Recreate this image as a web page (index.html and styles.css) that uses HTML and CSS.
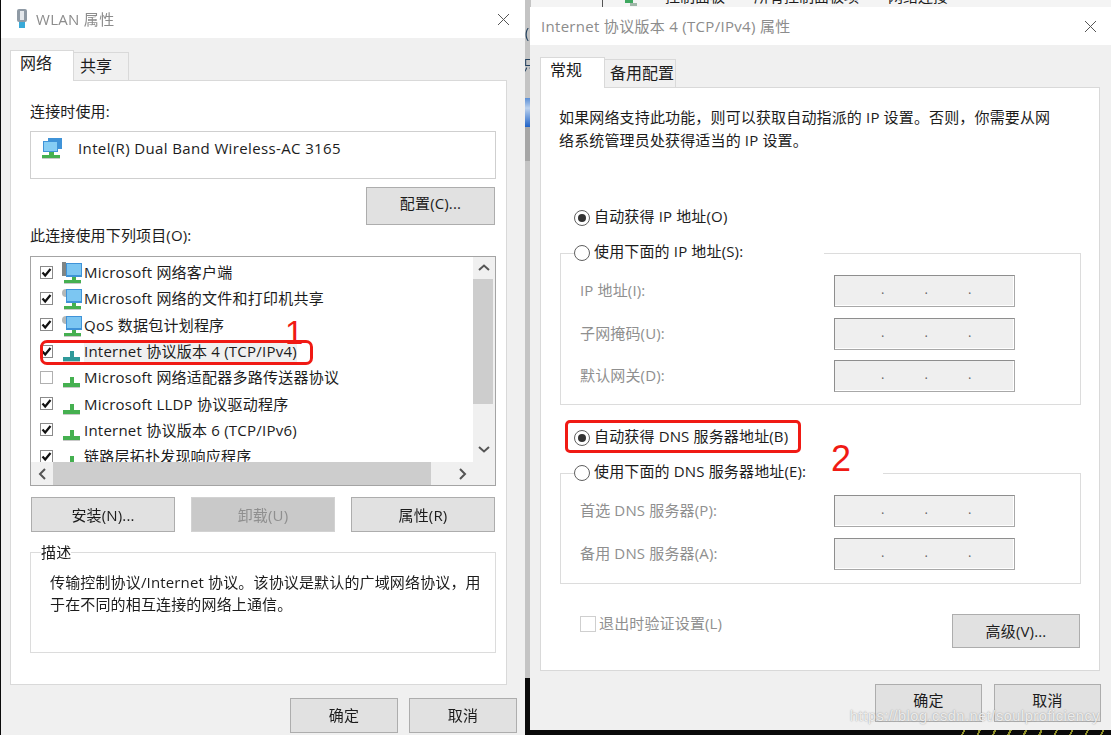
FILE: index.html
```html
<!DOCTYPE html>
<html lang="zh-CN">
<head>
<meta charset="utf-8">
<title>WLAN 属性</title>
<link rel="stylesheet" href="styles.css">
</head>
<body>
<svg class="defs" width="0" height="0" aria-hidden="true">
  <defs>
    <g id="net">
      <rect x="0" y="3" width="4" height="14" fill="#7f8585"/>
      <rect x="4" y="4" width="16" height="14" fill="#3f93d8"/>
      <rect x="5" y="5" width="14" height="11" fill="#7cc6f2"/>
      <rect x="10" y="18" width="4" height="4" fill="#45b050"/>
      <rect x="2" y="21" width="17" height="3" fill="#45b050"/>
      <rect x="2" y="24" width="17" height="1" fill="#c9c9c9"/>
    </g>
    <g id="gear">
      <circle cx="4" cy="8" r="4" fill="#b4b8b8"/>
      <rect x="4" y="4" width="16" height="14" fill="#3f93d8"/>
      <rect x="5" y="5" width="14" height="11" fill="#7cc6f2"/>
      <rect x="10" y="18" width="4" height="4" fill="#45b050"/>
      <rect x="2" y="21" width="17" height="3" fill="#45b050"/>
      <rect x="2" y="24" width="17" height="1" fill="#c9c9c9"/>
    </g>
    <g id="proto">
      <rect x="8" y="13" width="4" height="7" fill="#45b050"/>
      <rect x="1" y="19" width="17" height="4" fill="#45b050"/>
      <rect x="1" y="23" width="17" height="1" fill="#c9c9c9"/>
    </g>
    <g id="proto-sel">
      <rect x="8" y="13" width="4" height="7" fill="#2f9a9a"/>
      <rect x="1" y="19" width="17" height="4" fill="#2f9a9a"/>
      <rect x="1" y="23" width="17" height="1" fill="#c9c9c9"/>
    </g>
    <g id="close">
      <path d="M1 1 12 12M12 1 1 12" fill="none" stroke="#555" stroke-width="1"/>
    </g>
    <g id="check">
      <path d="M2.500 6.500 5.200 9.500 10.500 3" fill="none" stroke="#111" stroke-width="2.200"/>
    </g>
  </defs>
</svg>

<main class="desk">
  <div class="behind-top">
    <span class="sep"></span>
    <svg class="crumb-ico" width="12" height="7" viewBox="0 0 12 7"><rect x="0" y="0" width="8" height="3" fill="#3fa860"/><rect x="5" y="3" width="7" height="3" fill="#9fb7a8"/></svg>
    <span class="crumb">控制面板</span><span class="crumb">所有控制面板项</span><span class="crumb">网络连接</span>
  </div>
  <div class="strip">
    <span class="strip-char">(</span>
    <span class="strip-char strip-low">识</span>
    <span class="strip-blue"></span>
    <span class="strip-dark"></span>
  </div>
  <div class="stripes"></div>

  <section class="win win-a">
    <header class="titlebar">
      <svg class="usb" width="14" height="20" viewBox="0 0 14 20">
        <rect x="2" y="0" width="10" height="13" rx="2" fill="#8f9aa5"/>
        <rect x="5" y="2" width="4" height="9" fill="#e4e8ec"/>
        <rect x="4" y="13" width="6" height="6" fill="#38a9d8"/>
      </svg>
      <h1 class="title">WLAN 属性</h1>
      <svg class="close" width="13" height="13" viewBox="0 0 13 13"><use href="#close"/></svg>
    </header>
    <nav class="tabs">
      <span class="tab tab-on tab-a1">网络</span>
      <span class="tab tab-a2">共享</span>
    </nav>
    <div class="panel panel-a">
      <div class="lbl">连接时使用:</div>
      <div class="adapter">
        <svg class="adapter-ico" width="20" height="22" viewBox="0 0 20 22">
          <rect x="6" y="0" width="14" height="11" fill="#3f93d8"/>
          <rect x="1" y="3" width="15" height="11" fill="#3f93d8"/>
          <rect x="2" y="4" width="13" height="9" fill="#86cdf4"/>
          <rect x="7" y="14" width="5" height="3" fill="#45b050"/>
          <rect x="0" y="17" width="18" height="3" fill="#45b050"/>
          <rect x="0" y="20" width="18" height="1" fill="#c9c9c9"/>
        </svg>
        <span>Intel(R) Dual Band Wireless-AC 3165</span>
      </div>
      <div class="cfg-row"><button class="btn btn-cfg">配置(C)...</button></div>
      <div class="lbl lbl-items">此连接使用下列项目(O):</div>

      <div class="list">
        <div class="rows">
          <div class="row"><span class="cb"><svg width="13" height="13" viewBox="0 0 13 13"><use href="#check"/></svg></span><svg class="ri" width="20" height="26" viewBox="0 0 20 26"><use href="#net"/></svg><span class="rt">Microsoft 网络客户端</span></div>
          <div class="row"><span class="cb"><svg width="13" height="13" viewBox="0 0 13 13"><use href="#check"/></svg></span><svg class="ri" width="20" height="26" viewBox="0 0 20 26"><use href="#gear"/></svg><span class="rt">Microsoft 网络的文件和打印机共享</span></div>
          <div class="row"><span class="cb"><svg width="13" height="13" viewBox="0 0 13 13"><use href="#check"/></svg></span><svg class="ri" width="20" height="26" viewBox="0 0 20 26"><use href="#gear"/></svg><span class="rt">QoS 数据包计划程序</span></div>
          <div class="row"><span class="cb"><svg width="13" height="13" viewBox="0 0 13 13"><use href="#check"/></svg></span><svg class="ri" width="20" height="26" viewBox="0 0 20 26"><use href="#proto-sel"/></svg><span class="rt rt-sel">Internet 协议版本 4 (TCP/IPv4)</span></div>
          <div class="row"><span class="cb cb-off"></span><svg class="ri" width="20" height="26" viewBox="0 0 20 26"><use href="#proto"/></svg><span class="rt">Microsoft 网络适配器多路传送器协议</span></div>
          <div class="row"><span class="cb"><svg width="13" height="13" viewBox="0 0 13 13"><use href="#check"/></svg></span><svg class="ri" width="20" height="26" viewBox="0 0 20 26"><use href="#proto"/></svg><span class="rt">Microsoft LLDP 协议驱动程序</span></div>
          <div class="row"><span class="cb"><svg width="13" height="13" viewBox="0 0 13 13"><use href="#check"/></svg></span><svg class="ri" width="20" height="26" viewBox="0 0 20 26"><use href="#proto"/></svg><span class="rt">Internet 协议版本 6 (TCP/IPv6)</span></div>
          <div class="row"><span class="cb"><svg width="13" height="13" viewBox="0 0 13 13"><use href="#check"/></svg></span><svg class="ri" width="20" height="26" viewBox="0 0 20 26"><use href="#proto"/></svg><span class="rt">链路层拓扑发现响应程序</span></div>
        </div>
        <div class="vbar">
          <svg width="22" height="22" viewBox="0 0 22 22"><path d="M6 13 11 8.500 16 13" fill="none" stroke="#555" stroke-width="2"/></svg>
          <div class="vthumb"></div>
          <svg class="arrow-end" width="22" height="22" viewBox="0 0 22 22"><path d="M6 7 11 11.500 16 7" fill="none" stroke="#555" stroke-width="2"/></svg>
        </div>
        <div class="hbar">
          <svg width="22" height="22" viewBox="0 0 22 22"><path d="M14 6 9 11 14 16" fill="none" stroke="#555" stroke-width="2"/></svg>
          <div class="hthumb"></div>
          <svg class="arrow-end" width="22" height="22" viewBox="0 0 22 22"><path d="M9 6 14 11 9 16" fill="none" stroke="#555" stroke-width="2"/></svg>
        </div>
        <div class="corner"></div>
      </div>

      <div class="btn-row">
        <button class="btn">安装(N)...</button>
        <button class="btn btn-dis">卸载(U)</button>
        <button class="btn">属性(R)</button>
      </div>

      <fieldset class="group group-desc">
        <legend class="desc-leg">描述</legend>
        <p class="desc">传输控制协议/Internet 协议。该协议是默认的广域网络协议，用于在不同的相互连接的网络上通信。</p>
      </fieldset>
    </div>
    <footer class="foot foot-a">
      <button class="btn btn-foot-a">确定</button>
      <button class="btn btn-foot-a">取消</button>
    </footer>
  </section>

  <section class="win win-b">
    <header class="titlebar">
      <h1 class="title title-b">Internet 协议版本 4 (TCP/IPv4) 属性</h1>
      <svg class="close" width="13" height="13" viewBox="0 0 13 13"><use href="#close"/></svg>
    </header>
    <nav class="tabs">
      <span class="tab tab-on tab-b1">常规</span>
      <span class="tab tab-b2">备用配置</span>
    </nav>
    <div class="panel panel-b">
      <p class="intro">如果网络支持此功能，则可以获取自动指派的 IP 设置。否则，你需要从网络系统管理员处获得适当的 IP 设置。</p>

      <div class="radio-line radio-first"><span class="radio radio-on"></span>自动获得 IP 地址(O)</div>
      <fieldset class="group group-ip">
        <legend class="radio-leg radio-leg-ip"><span class="radio"></span>使用下面的 IP 地址(S):</legend>
        <div class="fields">
          <span class="flbl">IP 地址(I):</span><div class="ip"><i>.</i><i>.</i><i>.</i></div>
          <span class="flbl">子网掩码(U):</span><div class="ip"><i>.</i><i>.</i><i>.</i></div>
          <span class="flbl">默认网关(D):</span><div class="ip"><i>.</i><i>.</i><i>.</i></div>
        </div>
      </fieldset>

      <div class="radio-line radio-dns"><span class="radio radio-on"></span>自动获得 DNS 服务器地址(B)</div>
      <fieldset class="group group-dns">
        <legend class="radio-leg radio-leg-dns"><span class="radio"></span>使用下面的 DNS 服务器地址(E):</legend>
        <div class="fields">
          <span class="flbl">首选 DNS 服务器(P):</span><div class="ip"><i>.</i><i>.</i><i>.</i></div>
          <span class="flbl">备用 DNS 服务器(A):</span><div class="ip"><i>.</i><i>.</i><i>.</i></div>
        </div>
      </fieldset>

      <div class="adv-row">
        <div class="exit"><span class="cb-dis"></span>退出时验证设置(L)</div>
        <button class="btn btn-adv">高级(V)...</button>
      </div>
    </div>
    <footer class="foot foot-b">
      <button class="btn btn-foot-b">确定</button>
      <button class="btn btn-foot-b">取消</button>
    </footer>
  </section>

  <div class="mark mark-1"></div>
  <span class="num num-1">1</span>
  <div class="mark mark-2"></div>
  <span class="num num-2">2</span>
  <span class="watermark">https://blog.csdn.net/soulproficiency</span>
</main>
</body>
</html>
```

FILE: styles.css
```css
* { box-sizing: border-box; }
html, body { margin: 0; padding: 0; }
body {
  width: 1111px;
  height: 735px;
  overflow: hidden;
  background: #0a0a0a;
  font-family: "Open Sans", "Noto Sans CJK SC", "Noto Sans", sans-serif;
  font-size: 15px;
  letter-spacing: 0.15px;
  color: #1c1c1c;
}
.defs { position: absolute; }
.desk {
  position: relative;
  width: 1111px;
  height: 735px;
  overflow: hidden;
  filter: blur(0.45px);
}

/* what is visible of the windows behind */
.behind-top {
  position: absolute;
  left: 525px;
  top: 0;
  width: 586px;
  height: 7px;
  background: #f4f4f4;
  overflow: hidden;
  padding-left: 77px;
  display: flex;
  line-height: 4px;
  letter-spacing: 0;
}
.sep { width: 1px; height: 7px; background: #555; flex: none; margin-right: 22px; }
.crumb-ico { flex: none; margin-right: 28px; }
.crumb { display: block; margin: -6px 29px 0 0; flex: none; }
.strip {
  position: absolute;
  left: 525px;
  top: 0;
  width: 6px;
  height: 678px;
  background: #c4c4c4;
  overflow: hidden;
}
.strip-char { position: absolute; left: 0; top: 24px; font-size: 14px; line-height: 18px; color: #23415f; }
.strip-low { top: 56px; left: -6px; }
.strip-blue { position: absolute; left: 0; top: 98px; width: 6px; height: 29px; background: linear-gradient(#5b8fd6, #bcd2ee 35%, #1f63c8); }
.strip-dark { position: absolute; left: 0; top: 127px; width: 6px; height: 34px; background: #a6a6a6; }
.stripes {
  position: absolute;
  left: 950px;
  top: 730px;
  width: 161px;
  height: 5px;
  background: repeating-linear-gradient(115deg, #0a0a0a 0 12px, #8f8f2a 12px 14px);
}

/* windows */
.win {
  position: absolute;
  display: flex;
  flex-direction: column;
  background: #f0f0f0;
}
.win-a { left: 1px; top: 0; width: 524px; height: 735px; }
.win-b { left: 530px; top: 7px; width: 581px; height: 723px; }

.titlebar {
  height: 38px;
  flex: none;
  background: #fff;
  display: flex;
  align-items: center;
  padding-left: 14px;
}
.win-b .titlebar { padding-left: 11px; }
.usb { margin-right: 7px; }
.title { margin: 0 0 2px; font-size: 15px; font-weight: 400; color: #8c8c8c; letter-spacing: 0.3px; }
.close { margin-left: auto; margin-right: 15px; }
.win-b .close { margin-right: 14px; }

.tabs {
  display: flex;
  align-items: flex-end;
  height: 30px;
  margin: 12px 0 0 9px;
  flex: none;
  position: relative;
  z-index: 1;
}
.win-b .tabs { margin-left: 10px; }
.tab {
  height: 28px;
  border: 1px solid #d9d9d9;
  border-bottom: 0;
  background: #f0f0f0;
  line-height: 27px;
  font-size: 16px;
  letter-spacing: 0;
}
.tab-on {
  height: 31px;
  margin-bottom: -1px;
  background: #fff;
  line-height: 25px;
}
.tab-a1 { width: 64px; padding-left: 9px; }
.tab-a2 { width: 56px; margin-left: -1px; padding-left: 6px; }
.tab-b1 { width: 65px; padding-left: 9px; }
.tab-b2 { width: 72px; margin-left: -1px; padding-left: 5px; }

.panel {
  margin-left: 9px;
  background: #fff;
  border: 1px solid #d9d9d9;
  flex: none;
}
.panel-a { width: 497px; height: 605px; padding: 21px 0 0 19px; }
.panel-b { width: 560px; height: 584px; margin-left: 10px; padding: 18px 0 0 19px; }

.lbl { height: 18px; line-height: 18px; }
.adapter {
  width: 466px;
  height: 48px;
  margin-top: 11px;
  border: 1px solid #cfcfcf;
  padding-left: 11px;
  display: flex;
  align-items: flex-start;
  line-height: 32px;
  letter-spacing: 0.37px;
}
.adapter-ico { margin: 6px 16px 0 0; flex: none; }
.cfg-row { display: flex; justify-content: flex-end; width: 465px; margin-top: 8px; }

.btn {
  font: inherit;
  letter-spacing: inherit;
  color: #1c1c1c;
  background: #e1e1e1;
  border: 1.500px solid #adadad;
  padding: 0 0 2px;
  display: block;
}
.btn-cfg { width: 129px; height: 38px; padding-bottom: 8px; }
.lbl-items { margin-top: 1px; }

.list {
  width: 466px;
  height: 230px;
  margin-top: 12px;
  border: 1px solid #a4a4a4;
  display: grid;
  grid-template-columns: 442px 22px;
  grid-template-rows: 205px 23px;
  background: #f0f0f0;
}
.rows { background: #fff; overflow: hidden; padding-top: 2px; }
.row {
  display: flex;
  align-items: center;
  height: 26.300px;
  padding-left: 9px;
}
.cb {
  width: 13px;
  height: 13px;
  flex: none;
  border: 1px solid #8a8a8a;
  background: #fff;
  position: relative;
  display: block;
}
.cb svg { position: absolute; left: -1px; top: -1px; }
.cb-off { border-color: #b0b0b0; }
.ri { flex: none; margin: 0 2px 0 9px; }
.rt { white-space: nowrap; line-height: 22px; letter-spacing: 0.23px; }
.rt-sel { background: #f0f0f0; }

.vbar { display: flex; flex-direction: column; }
.vbar svg, .hbar svg { flex: none; display: block; }
.vthumb { width: 20px; height: 125px; background: #cdcdcd; }
.vbar .arrow-end { margin-top: auto; }
.hbar { display: flex; align-items: center; }
.hthumb { width: 378px; height: 23px; background: #cdcdcd; }
.hbar .arrow-end { margin-left: auto; }
.corner { background: #f0f0f0; }

.btn-row {
  display: flex;
  gap: 16px;
  margin: 11px 0 0 1px;
}
.btn-row .btn { width: 144px; height: 35px; padding-bottom: 0; }
.btn-row .btn-dis { background: #c9c9c9; border-color: #d2d2d2; color: #8f8f8f; }

.group {
  margin: 0;
  border: 1px solid #dcdcdc;
  min-width: 0;
}
.group-desc {
  width: 466px;
  height: 111px;
  margin-top: 10px;
  padding: 9px 19px 0;
}
.desc-leg { margin-left: -9px; padding: 0; line-height: 20px; }
.desc { margin: 0; width: 434px; line-height: 22px; }

.foot { display: flex; flex: none; }
.foot-a { gap: 11px; justify-content: flex-end; margin-top: 13px; padding-right: 8px; }
.btn-foot-a { width: 108px; height: 35px; padding-bottom: 3px; }
.foot-b { gap: 12px; justify-content: flex-end; margin-top: 13px; padding-right: 10px; }
.btn-foot-b { width: 107px; height: 38px; padding-bottom: 8px; }

.intro { margin: 0 0 0 -1px; width: 497px; line-height: 23px; }
.radio-line {
  display: flex;
  align-items: flex-start;
  height: 20px;
  line-height: 17px;
  padding-left: 14px;
  white-space: nowrap;
}
.radio-first { margin-top: 56px; }
.radio {
  width: 16px;
  height: 16px;
  flex: none;
  border-radius: 50%;
  border: 1.500px solid #5f5f5f;
  background: #fff;
  margin: 2px 4px 0 0;
  position: relative;
  display: inline-block;
}
.radio-on::after {
  content: "";
  position: absolute;
  left: 2.500px;
  top: 2.500px;
  width: 8px;
  height: 8px;
  border-radius: 50%;
  background: #333;
}
.group-ip { width: 521px; height: 162px; margin-top: 15px; padding: 12px 0 0 19px; }
.group-dns { width: 521px; height: 121px; margin-top: 15px; padding: 12px 0 0 19px; }
.radio-leg {
  display: flex;
  align-items: flex-start;
  height: 20px;
  line-height: 17px;
  padding: 0;
  margin-left: -6px;
  white-space: nowrap;
}
.radio-leg-ip { width: 250px; }
.radio-leg-dns { width: 309px; }
.radio-dns { margin-top: 23px; }

.fields {
  display: grid;
  grid-template-columns: 254px 181px;
  row-gap: 10.500px;
  align-items: center;
}
.flbl { color: #8f8f8f; line-height: 30px; padding-bottom: 2px; }
.ip {
  height: 32px;
  background: #efefef;
  border: 1.500px solid #8e8e8e;
  border-right-color: #a8a8a8;
  border-bottom-color: #a8a8a8;
  box-shadow: inset -1px -1px 0 #fff;
  display: flex;
  padding-left: 6px;
}
.ip i {
  width: 43.500px;
  font-style: normal;
  text-align: right;
  color: #666;
  line-height: 27px;
  font-size: 13px;
}

.adv-row {
  display: flex;
  align-items: flex-start;
  justify-content: space-between;
  width: 520px;
  margin: 30px 0 0 0;
  padding-left: 20px;
}
.exit { display: flex; align-items: flex-start; height: 20px; line-height: 19px; color: #8f8f8f; white-space: nowrap; }
.cb-dis {
  width: 16px;
  height: 16px;
  border: 1px solid #cfcfcf;
  background: #fff;
  margin: 2px 3px 0 0;
  flex: none;
  display: block;
}
.btn-adv { width: 128px; height: 34px; }

/* annotations drawn over the screenshot */
.mark {
  position: absolute;
  border: 3.500px solid #f01a14;
  border-radius: 5px;
}
.mark-1 { left: 40px; top: 340px; width: 273px; height: 25px; border-radius: 7px; }
.mark-2 { left: 565px; top: 420px; width: 236px; height: 33px; }
.num {
  position: absolute;
  color: #f01a14;
  font-family: "Liberation Sans", sans-serif;
  line-height: 1;
}
.num-1 { left: 285px; top: 316px; font-size: 33px; }
.num-2 { left: 831px; top: 441px; font-size: 36px; }
.watermark {
  position: absolute;
  left: 850px;
  top: 706px;
  font-family: "Liberation Sans", sans-serif;
  font-size: 14.500px;
  line-height: 20px;
  letter-spacing: 0.55px;
  color: rgba(255, 255, 255, 0.8);
  text-shadow: 0 0 1.500px #888;
  white-space: nowrap;
}
```
